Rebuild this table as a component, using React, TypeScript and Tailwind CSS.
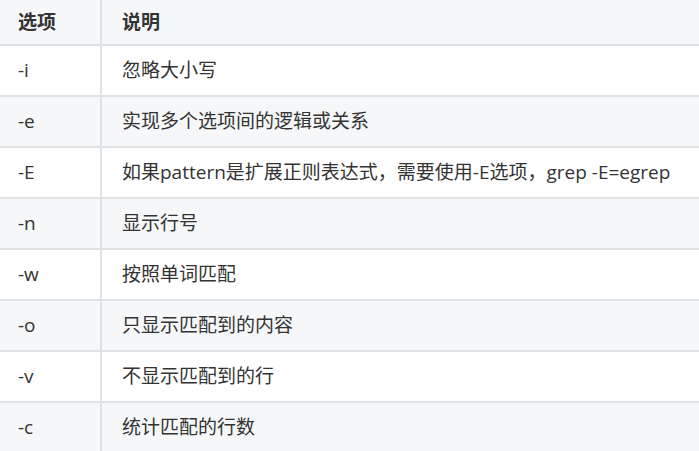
const rows: [string, string][] = [
  ["-i", "忽略大小写"],
  ["-e", "实现多个选项间的逻辑或关系"],
  ["-E", "如果pattern是扩展正则表达式，需要使用-E选项，grep -E=egrep"],
  ["-n", "显示行号"],
  ["-w", "按照单词匹配"],
  ["-o", "只显示匹配到的内容"],
  ["-v", "不显示匹配到的行"],
  ["-c", "统计匹配的行数"],
]

export default function App() {
  return (
    <div
      className="w-[699px] h-[451px] overflow-hidden bg-white text-[19px] text-[#333333]"
      style={{ fontFamily: '"Open Sans", "Noto Sans CJK SC", sans-serif' }}
    >
      <div className="w-[760px]">
        {/* header */}
        <div className="flex h-[46px] border-b-2 border-[#dfe2e5] bg-[#f6f7f8] font-bold">
          <div className="flex w-[102px] shrink-0 items-center border-r-2 border-[#dfe2e5] pl-[18px]">选项</div>
          <div className="flex flex-1 items-center pl-[20px]">说明</div>
        </div>
        {rows.map(([opt, desc], i) => (
          <div
            key={opt}
            className={
              i % 2 === 1
                ? "flex h-[51px] border-b-2 border-[#dfe2e5] bg-[#f6f7f8]"
                : "flex h-[51px] border-b-2 border-[#dfe2e5] bg-white"
            }
          >
            <div className="flex w-[102px] shrink-0 items-center border-r-2 border-[#dfe2e5] pl-[18px]">{opt}</div>
            <div className="flex flex-1 items-center pl-[20px] whitespace-nowrap">{desc}</div>
          </div>
        ))}
      </div>
    </div>
  )
}
